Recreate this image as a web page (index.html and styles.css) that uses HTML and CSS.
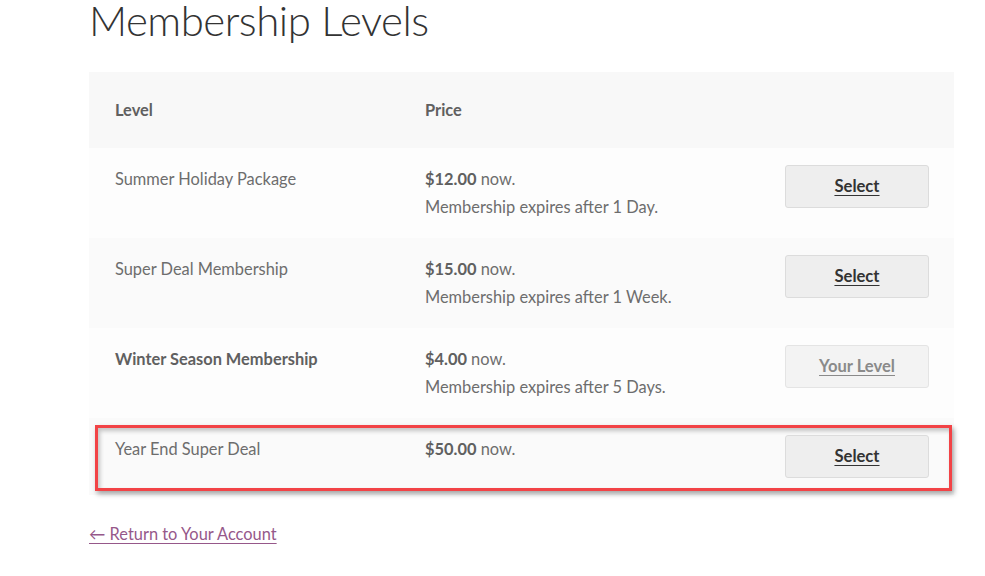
FILE: index.html
```html
<!DOCTYPE html>
<html lang="en">
<head>
<meta charset="utf-8">
<title>Membership Levels</title>
<link rel="stylesheet" href="styles.css">
</head>
<body>
<main class="page">
  <h1 class="title">Membership Levels</h1>
  <div class="table-wrap">
    <table class="levels">
      <thead>
        <tr>
          <th class="col-level">Level</th>
          <th class="col-price">Price</th>
          <th class="col-action"></th>
        </tr>
      </thead>
      <tbody>
        <tr class="odd">
          <td class="col-level">Summer Holiday Package</td>
          <td class="col-price"><strong>$12.00</strong> now.<br>Membership expires after 1 Day.</td>
          <td class="col-action"><a class="btn" href="#">Select</a></td>
        </tr>
        <tr class="even">
          <td class="col-level">Super Deal Membership</td>
          <td class="col-price"><strong>$15.00</strong> now.<br>Membership expires after 1 Week.</td>
          <td class="col-action"><a class="btn" href="#">Select</a></td>
        </tr>
        <tr class="odd current">
          <td class="col-level"><strong>Winter Season Membership</strong></td>
          <td class="col-price"><strong>$4.00</strong> now.<br>Membership expires after 5 Days.</td>
          <td class="col-action"><a class="btn btn-disabled" href="#">Your Level</a></td>
        </tr>
        <tr class="even">
          <td class="col-level">Year End Super Deal</td>
          <td class="col-price"><strong>$50.00</strong> now.</td>
          <td class="col-action"><a class="btn" href="#">Select</a></td>
        </tr>
      </tbody>
    </table>
    <div class="highlight" aria-hidden="true"></div>
  </div>
  <p class="back"><a href="#">&larr; Return to Your Account</a></p>
</main>
</body>
</html>
```

FILE: styles.css
```css
html, body {
  margin: 0;
  padding: 0;
  background: #ffffff;
}

body {
  font-family: "Lato", "Source Sans Pro", "Liberation Sans", sans-serif;
  font-size: 16.4px;
  line-height: 28px;
  color: #6d6d6d;
}

.page {
  width: 865px;
  margin-left: 89px;
}

.title {
  font-family: "Lato", "Liberation Sans", sans-serif;
  font-weight: 300;
  font-size: 42px;
  line-height: 42px;
  letter-spacing: -0.5px;
  color: #333333;
  margin: 0;
  padding-top: 0;
  height: 72px;
  position: relative;
  top: -1px;
}

.table-wrap {
  position: relative;
}

.levels {
  width: 100%;
  border-collapse: collapse;
  border-spacing: 0;
  table-layout: fixed;
}

.levels th,
.levels td {
  text-align: left;
  vertical-align: top;
  padding: 17px 25px 17px 26px;
}

.levels thead th {
  background: #f8f8f8;
  font-weight: 700;
  color: #606060;
  padding-top: 24px;
  padding-bottom: 24px;
}

.levels .col-level { width: 259px; }
.levels .col-price { width: 308px; }
.levels .col-action { text-align: right; }

.levels tr.odd td { background: #fdfdfd; }
.levels tr.even td { background: #fafafa; }

.levels strong {
  font-weight: 700;
  color: #606060;
}

.btn {
  display: inline-block;
  box-sizing: border-box;
  width: 144px;
  height: 43px;
  line-height: 40px;
  text-align: center;
  background: #eeeeee;
  border: 1px solid #dcdcdc;
  border-radius: 3px;
  color: #333333;
  font-weight: 700;
  font-size: 16.6px;
  text-decoration: underline;
  text-underline-offset: 3px;
}

.btn-disabled {
  background: #f3f3f3;
  border-color: #e4e4e4;
  color: #8a8a8a;
}

.highlight {
  position: absolute;
  left: 6px;
  top: 353px;
  width: 857px;
  height: 66px;
  box-sizing: border-box;
  border: 3px solid #f24346;
  box-shadow: 2px 3px 5px rgba(0, 0, 0, 0.35), inset 2px 3px 4px rgba(0, 0, 0, 0.22);
  pointer-events: none;
}

.back {
  margin: 25px 0 0;
}

.back a {
  color: #96588a;
  text-decoration: underline;
  text-underline-offset: 3px;
}
```
